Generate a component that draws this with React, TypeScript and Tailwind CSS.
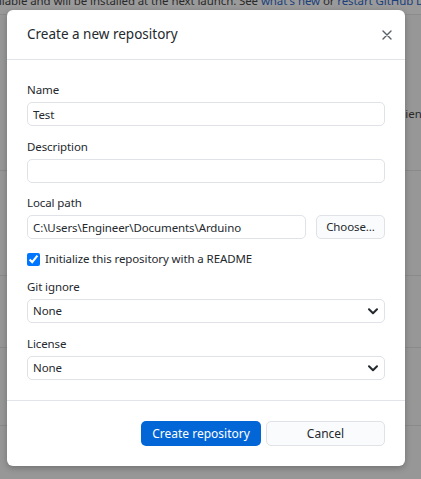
import React from 'react';

const font = { fontFamily: '"Noto Sans", "Open Sans", sans-serif' };

const Chevron: React.FC = () => (
  <svg width="10" height="7" viewBox="0 0 10 7" className="absolute right-[7px] top-[9px] pointer-events-none">
    <path d="M1 1.2 L5 5.2 L9 1.2" fill="none" stroke="#24292e" strokeWidth="2" strokeLinecap="round" strokeLinejoin="round" />
  </svg>
);

const Field: React.FC<{ label: string; className?: string; children: React.ReactNode }> = ({ label, className, children }) => (
  <div className={className}>
    <label className="block h-4 leading-4 mb-1 text-[11.5px] tracking-[-0.1px] text-[#24292e]">{label}</label>
    {children}
  </div>
);

const inputCls =
  'block w-full h-6 px-[5px] rounded-[5px] border border-[#dfe2e6] bg-white text-[11.5px] tracking-[-0.1px] text-[#24292e] outline-none';

const Select: React.FC<{ value: string }> = ({ value }) => (
  <div className="relative">
    <select className={`${inputCls} appearance-none`} defaultValue={value}>
      <option>{value}</option>
    </select>
    <Chevron />
  </div>
);

export default function App() {
  return (
    <div className="relative w-[421px] h-[479px] overflow-hidden bg-[#979797]" style={font}>
      {/* app behind the dimmed overlay */}
      <div className="h-[15px] overflow-hidden border-b border-[#8c8c8c] bg-[#9a9a9a]">
        <p className="-mt-[7px] -ml-[1px] whitespace-nowrap text-[11.5px] tracking-[-0.1px] leading-4 text-[#2a2a2a]">
          llable and will be installed at the next launch. See{' '}
          <span className="text-[#1a3f7a]">what's new</span> or{' '}
          <span className="text-[#1a3f7a]">restart GitHub Desktop</span>
        </p>
      </div>
      <div className="h-[156px] border-b border-[#8a8a8a] pt-[91px]">
        <p className="pl-[395px] whitespace-nowrap text-[11.5px] leading-4 text-[#2a2a2a]">Client</p>
      </div>
      <div className="h-[105px] border-b border-[#8a8a8a]" />
      <div className="h-[72px] border-b border-[#8a8a8a]" />
      <div className="h-[78px] border-b border-[#8a8a8a]" />

      {/* modal */}
      <div className="absolute left-[7px] top-[10px] w-[398px] rounded-[6px] bg-white shadow-[0_2px_6px_rgba(0,0,0,0.25)]">
        <div className="flex h-[50px] items-center justify-between border-b border-[#e1e4e8] pl-5 pr-[13px]">
          <h1 className="text-[13.5px] text-[#24292e]">Create a new repository</h1>
          <svg width="10" height="10" viewBox="0 0 10 10">
            <path d="M1 1 L9 9 M9 1 L1 9" stroke="#586069" strokeWidth="1.4" strokeLinecap="round" />
          </svg>
        </div>

        <div className="px-5 pt-[22px] pb-5">
          <Field label="Name">
            <input className={inputCls} defaultValue="Test" />
          </Field>
          <Field label="Description" className="mt-[13px]">
            <input className={inputCls} />
          </Field>
          <Field label="Local path" className="mt-3">
            <div className="flex gap-[10px]">
              <input className={`${inputCls} flex-1`} defaultValue="C:\Users\Engineer\Documents\Arduino" />
              <button className="h-6 w-[69px] shrink-0 rounded-[5px] border border-[#dfe2e6] bg-[#fafbfc] text-[11.5px] tracking-[-0.1px] text-[#24292e]">
                Choose…
              </button>
            </div>
          </Field>
          <label className="mt-3 flex h-4 items-center gap-[5px] text-[11.5px] tracking-[-0.1px] text-[#24292e]">
            <input type="checkbox" defaultChecked className="m-0 h-[13px] w-[13px] accent-[#0075ff]" />
            Initialize this repository with a README
          </label>
          <Field label="Git ignore" className="mt-3">
            <Select value="None" />
          </Field>
          <Field label="License" className="mt-[13px]">
            <Select value="None" />
          </Field>
        </div>

        <div className="flex justify-end gap-[5px] border-t border-[#e1e4e8] px-5 pt-5 pb-5">
          <button className="h-[25px] w-[120px] rounded-[5px] bg-[#0366d6] text-[12px] text-white">
            Create repository
          </button>
          <button className="h-[25px] w-[119px] rounded-[5px] border border-[#dfe2e6] bg-[#fafbfc] text-[12px] text-[#24292e]">
            Cancel
          </button>
        </div>
      </div>
    </div>
  );
}
